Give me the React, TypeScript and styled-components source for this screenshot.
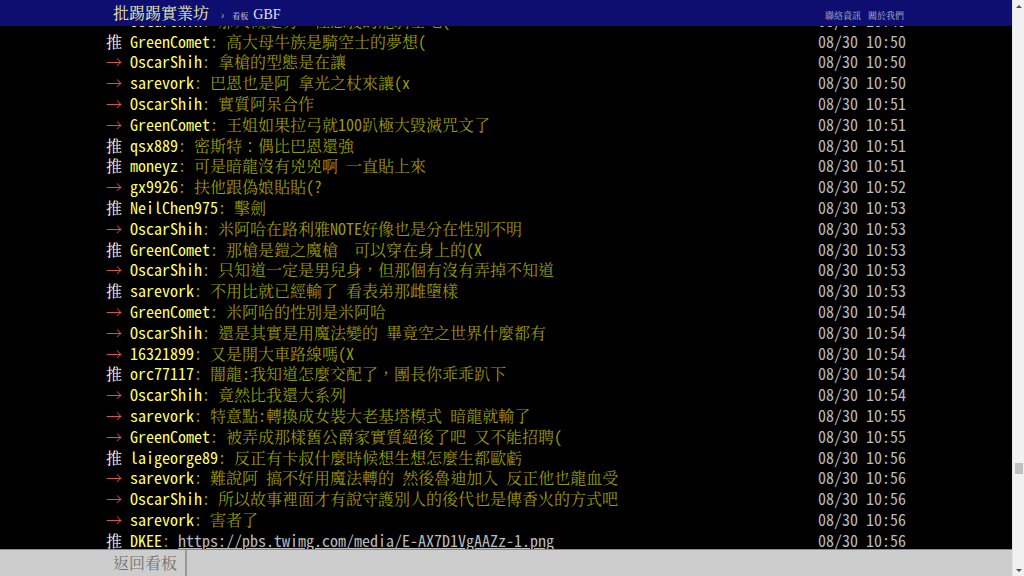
import React from 'react';
import styled, { createGlobalStyle } from 'styled-components';

const GlobalStyle = createGlobalStyle`
  html, body { margin: 0; padding: 0; background: #000; overflow: hidden; }
  #root { width: 1024px; height: 576px; }
`;

const HALF = `"Noto Sans Mono CJK TC", "Noto Sans Mono CJK SC", "Liberation Mono", monospace`;
const SERIF = `"Noto Serif CJK TC", "Noto Sans CJK TC", "Liberation Serif", serif`;

const Page = styled.div`
  display: flex;
  width: 1024px;
  height: 576px;
`;

const Main = styled.div`
  flex: 1;
  min-width: 0;
  display: flex;
  flex-direction: column;
  background: #000;
`;

const TopBar = styled.header`
  flex: none;
  height: 26px;
  background: #0e0e70;
`;

const TopInner = styled.div`
  width: 800px;
  height: 26px;
  margin: 0 auto;
  padding: 3px 2px 0 7px;
  box-sizing: border-box;
  display: flex;
  align-items: baseline;
  line-height: 1.2;
  font-family: ${SERIF};
`;

const Logo = styled.a`
  font-size: 16px;
  color: #f0f0b0;
  text-decoration: none;
`;

const Crumb = styled.span`
  margin-left: 12px;
  font-size: 10px;
  color: #aaa;
  font-family: "Liberation Sans", sans-serif;
`;

const BoardLabel = styled.span`
  margin-left: 8px;
  font-size: 8px;
  color: #ddd;
`;

const BoardName = styled.a`
  margin-left: 5px;
  font-size: 14px;
  color: #e0e0ee;
  font-family: "Liberation Serif", serif;
  text-decoration: none;
`;

const TopLinks = styled.nav`
  margin-left: auto;
  display: flex;
  gap: 7px;
`;

const TopLink = styled.a`
  font-size: 9px;
  color: #b8b8cc;
  text-decoration: none;
`;

const Content = styled.main`
  flex: 1;
  min-height: 0;
  overflow: hidden;
`;

const PushList = styled.div`
  width: 800px;
  margin: -16.2px auto 0;
  font-family: ${SERIF};
  font-size: 16px;
`;

const Row = styled.div`
  display: flex;
  height: 20.8px;
  line-height: 20.8px;
  white-space: pre;
`;

const Half = styled.span`
  font-family: ${HALF};
`;

const Tag = styled.span<{ $push: boolean }>`
  color: ${(p) => (p.$push ? '#f4f4f4' : '#f66')};
`;

const UserId = styled.span`
  color: #ff6;
`;

const Text = styled.span`
  color: #990;
`;

const Link = styled.a`
  color: #bbb;
  text-decoration: underline;
`;

const Time = styled.span`
  margin-left: auto;
  color: #bbb;
`;

const BottomBar = styled.footer`
  flex: none;
  height: 27px;
  box-sizing: border-box;
  border-top: 1px solid #8a8a8a;
  background: #cdcdcd;
`;

const BottomInner = styled.div`
  width: 800px;
  height: 100%;
  margin: 0 auto;
  display: flex;
`;

const BackButton = styled.a`
  padding: 0 8px 0 7px;
  border-right: 2px solid #999;
  font-family: ${SERIF};
  font-size: 16px;
  line-height: 26px;
  color: #737373;
  text-decoration: none;
`;

const ScrollTrack = styled.div`
  flex: none;
  width: 12px;
  display: flex;
  flex-direction: column;
  background: #f1f1f1;
  border-left: 1px solid #e6e6e6;
  box-sizing: border-box;
`;

const ArrowBox = styled.div`
  flex: none;
  height: 12px;
  display: flex;
  align-items: center;
  justify-content: center;
`;

const ArrowUp = styled.span`
  width: 0;
  height: 0;
  border-left: 3px solid transparent;
  border-right: 3px solid transparent;
  border-bottom: 3px solid #505050;
`;

const ArrowDown = styled.span`
  width: 0;
  height: 0;
  border-left: 3px solid transparent;
  border-right: 3px solid transparent;
  border-top: 3px solid #505050;
`;

const Rail = styled.div`
  flex: 1;
  display: flex;
  flex-direction: column;
  align-items: center;
`;

const Thumb = styled.div`
  width: 8px;
  height: 11px;
  background: #c1c1c1;
`;

/* ASCII runs are half-width (8px) in the BBS screen; CJK runs are full-width Ming glyphs. */
function Mixed({ text }: { text: string }) {
  const parts = text.match(/[\x20-\x7e]+|[^\x20-\x7e]+/g) || [];
  return (
    <>
      {parts.map((s, i) =>
        /^[\x20-\x7e]/.test(s) ? <Half key={i}>{s}</Half> : <React.Fragment key={i}>{s}</React.Fragment>
      )}
    </>
  );
}

type Push = { t: '推' | '→'; u: string; c: string; time: string; url?: string };

const pushes: Push[] = [
  { t: '→', u: 'OscarShih', c: '那大概是另一種意義的龍騎士吧(', time: '08/30 10:49' },
  { t: '推', u: 'GreenComet', c: '高大母牛族是騎空士的夢想(', time: '08/30 10:50' },
  { t: '→', u: 'OscarShih', c: '拿槍的型態是在讓', time: '08/30 10:50' },
  { t: '→', u: 'sarevork', c: '巴恩也是阿 拿光之杖來讓(x', time: '08/30 10:50' },
  { t: '→', u: 'OscarShih', c: '實質阿呆合作', time: '08/30 10:51' },
  { t: '→', u: 'GreenComet', c: '王姐如果拉弓就100趴極大毀滅咒文了', time: '08/30 10:51' },
  { t: '推', u: 'qsx889', c: '密斯特：偶比巴恩還強', time: '08/30 10:51' },
  { t: '推', u: 'moneyz', c: '可是暗龍沒有兇兇啊 一直貼上來', time: '08/30 10:51' },
  { t: '→', u: 'gx9926', c: '扶他跟偽娘貼貼(?', time: '08/30 10:52' },
  { t: '推', u: 'NeilChen975', c: '擊劍', time: '08/30 10:53' },
  { t: '→', u: 'OscarShih', c: '米阿哈在路利雅NOTE好像也是分在性別不明', time: '08/30 10:53' },
  { t: '推', u: 'GreenComet', c: '那槍是鎧之魔槍  可以穿在身上的(X', time: '08/30 10:53' },
  { t: '→', u: 'OscarShih', c: '只知道一定是男兒身，但那個有沒有弄掉不知道', time: '08/30 10:53' },
  { t: '推', u: 'sarevork', c: '不用比就已經輸了 看表弟那雌墮樣', time: '08/30 10:53' },
  { t: '→', u: 'GreenComet', c: '米阿哈的性別是米阿哈', time: '08/30 10:54' },
  { t: '→', u: 'OscarShih', c: '還是其實是用魔法變的 畢竟空之世界什麼都有', time: '08/30 10:54' },
  { t: '→', u: '16321899', c: '又是開大車路線嗎(X', time: '08/30 10:54' },
  { t: '推', u: 'orc77117', c: '闇龍:我知道怎麼交配了，團長你乖乖趴下', time: '08/30 10:54' },
  { t: '→', u: 'OscarShih', c: '竟然比我還大系列', time: '08/30 10:54' },
  { t: '→', u: 'sarevork', c: '特意點:轉換成女裝大老基塔模式 暗龍就輸了', time: '08/30 10:55' },
  { t: '→', u: 'GreenComet', c: '被弄成那樣舊公爵家實質絕後了吧 又不能招聘(', time: '08/30 10:55' },
  { t: '推', u: 'laigeorge89', c: '反正有卡叔什麼時候想生想怎麼生都歐虧', time: '08/30 10:56' },
  { t: '→', u: 'sarevork', c: '難說阿 搞不好用魔法轉的 然後魯迪加入 反正他也龍血受', time: '08/30 10:56' },
  { t: '→', u: 'OscarShih', c: '所以故事裡面才有說守護別人的後代也是傳香火的方式吧', time: '08/30 10:56' },
  { t: '→', u: 'sarevork', c: '害者了', time: '08/30 10:56' },
  { t: '推', u: 'DKEE', c: '', url: 'https://pbs.twimg.com/media/E-AX7D1VgAAZz-1.png', time: '08/30 10:56' },
];

export default function App() {
  return (
    <>
      <GlobalStyle />
      <Page>
        <Main>
          <TopBar>
            <TopInner>
              <Logo href="#">批踢踢實業坊</Logo>
              <Crumb>›</Crumb>
              <BoardLabel>看板</BoardLabel>
              <BoardName href="#">GBF</BoardName>
              <TopLinks>
                <TopLink href="#">聯絡資訊</TopLink>
                <TopLink href="#">關於我們</TopLink>
              </TopLinks>
            </TopInner>
          </TopBar>
          <Content>
            <PushList>
              {pushes.map((p, i) => (
                <Row key={i}>
                  <Tag $push={p.t === '推'}>
                    {p.t}
                    <Half> </Half>
                  </Tag>
                  <UserId>
                    <Half>{p.u}</Half>
                  </UserId>
                  <Text>
                    <Half>: </Half>
                    <Mixed text={p.c} />
                    {p.url && (
                      <Link href="#">
                        <Half>{p.url}</Half>
                      </Link>
                    )}
                  </Text>
                  <Time>
                    <Half>{p.time}</Half>
                  </Time>
                </Row>
              ))}
            </PushList>
          </Content>
          <BottomBar>
            <BottomInner>
              <BackButton href="#">返回看板</BackButton>
            </BottomInner>
          </BottomBar>
        </Main>
        <ScrollTrack>
          <ArrowBox>
            <ArrowUp />
          </ArrowBox>
          <Rail>
            <Thumb style={{ marginTop: 451 }} />
          </Rail>
          <ArrowBox>
            <ArrowDown />
          </ArrowBox>
        </ScrollTrack>
      </Page>
    </>
  );
}
